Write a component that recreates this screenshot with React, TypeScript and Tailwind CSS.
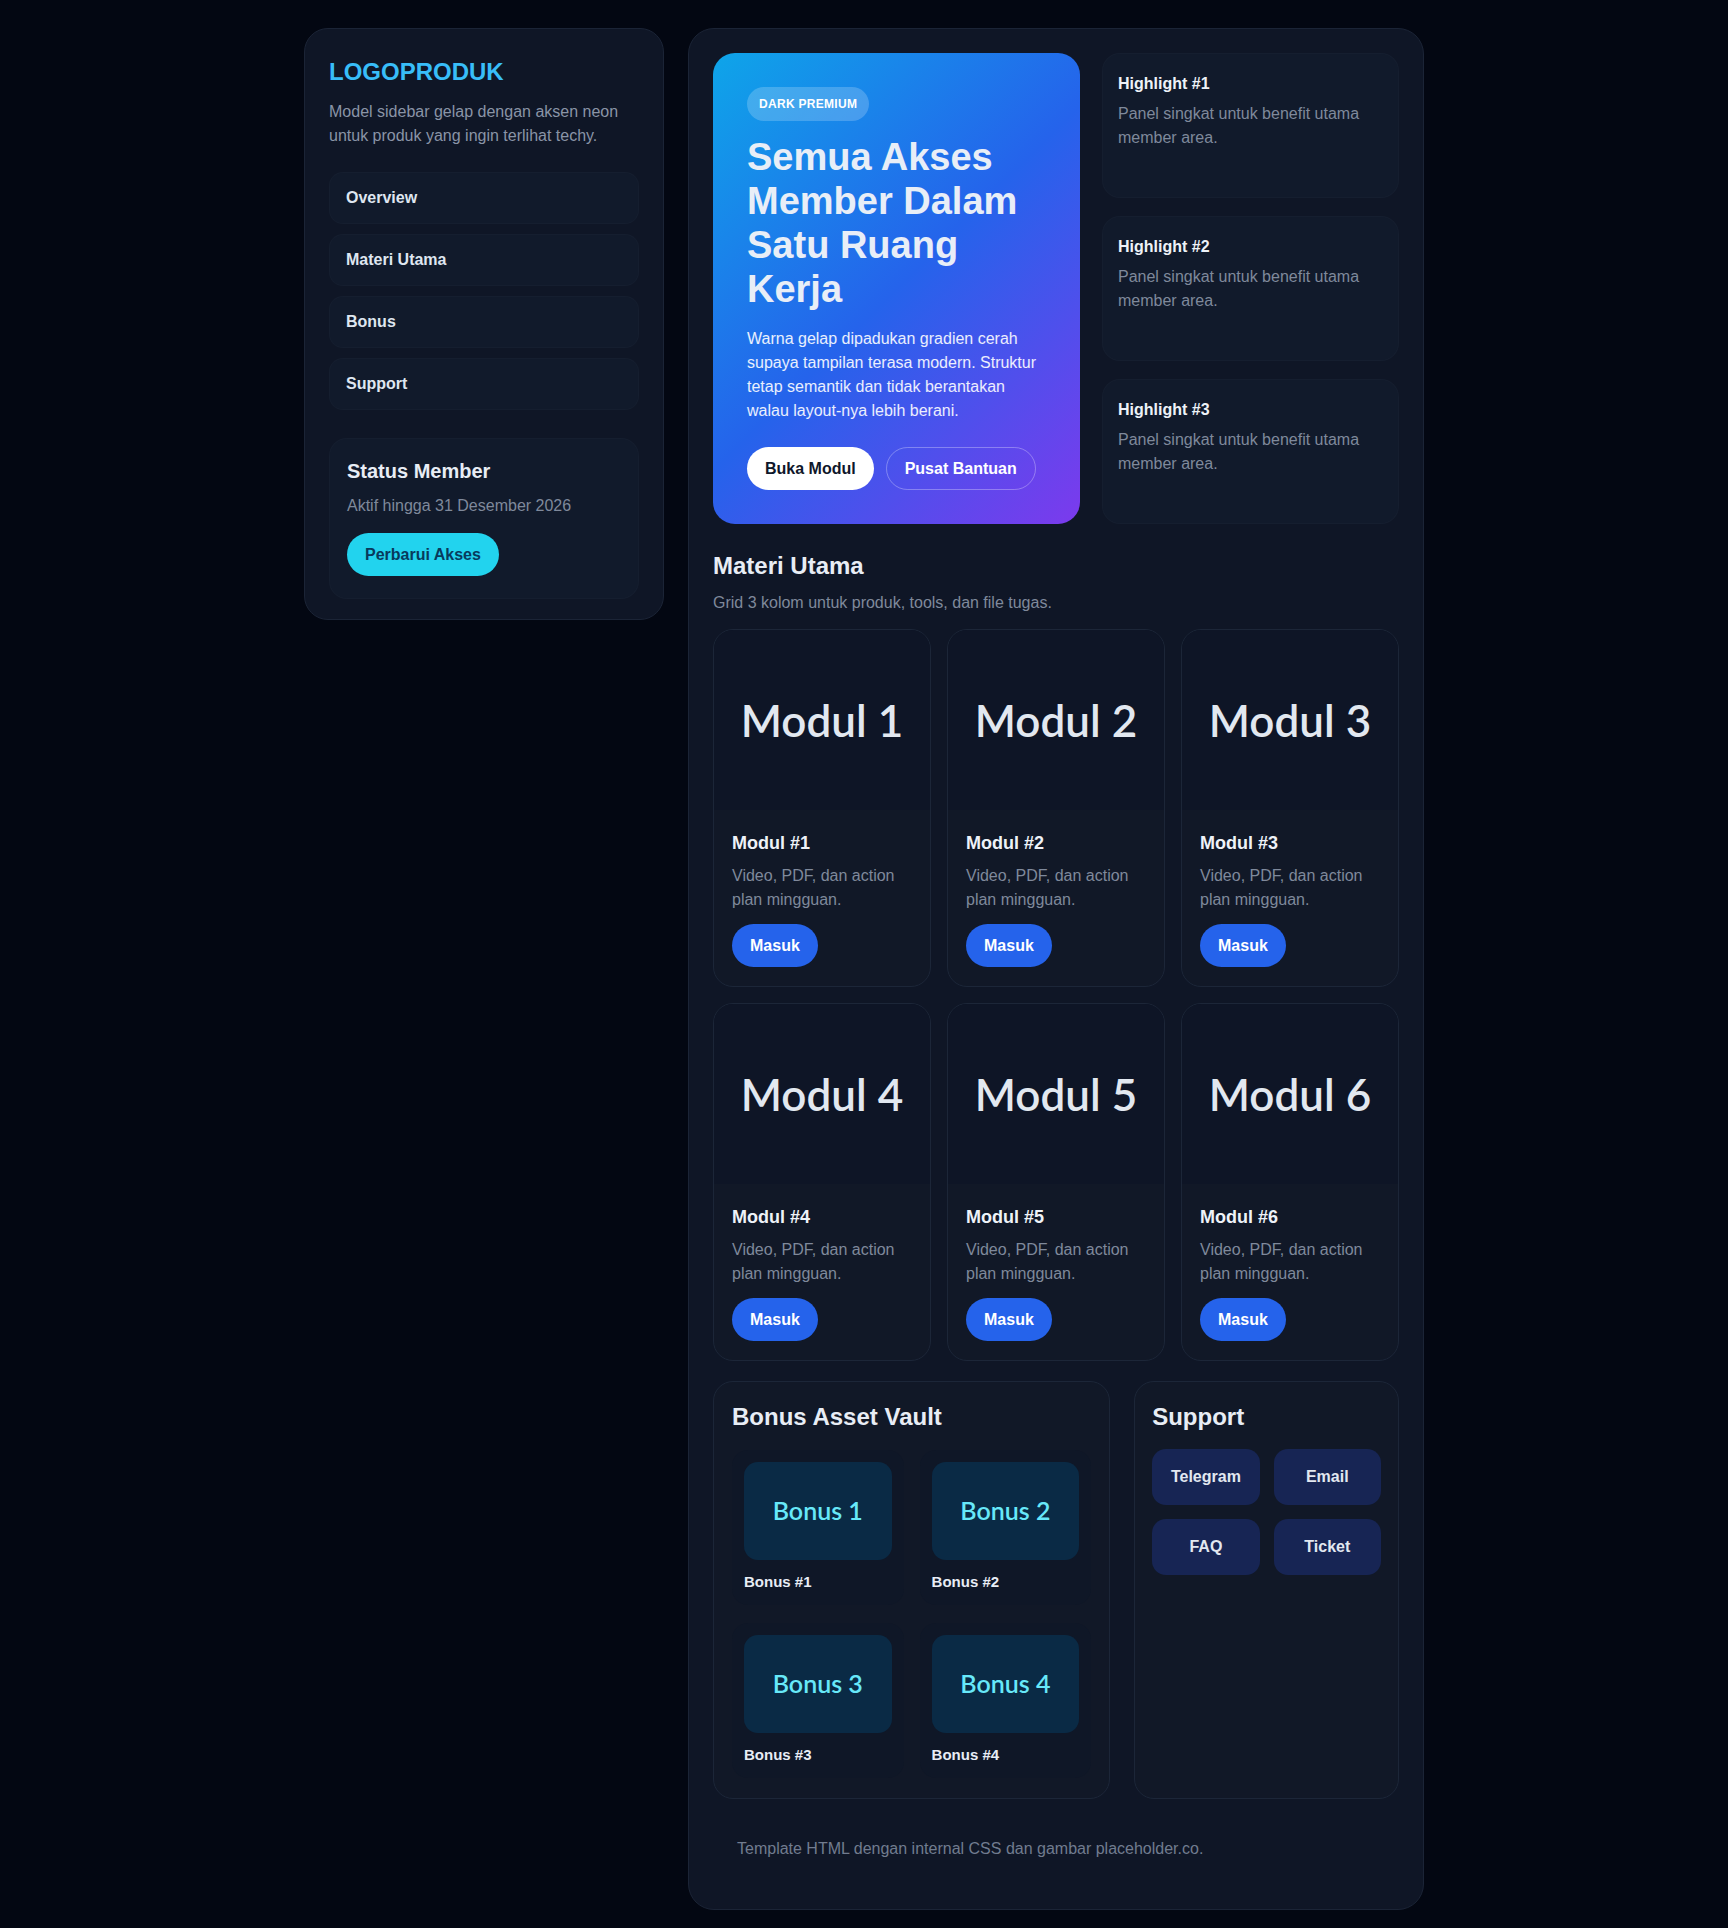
const navItems = ["Overview", "Materi Utama", "Bonus", "Support"];
const modules = [1, 2, 3, 4, 5, 6];
const bonuses = [1, 2, 3, 4];
const supportLinks = ["Telegram", "Email", "FAQ", "Ticket"];

function Sidebar() {
  return (
    <aside className="rounded-[24px] border border-[#1b2436] bg-[#0f1626] px-6 pt-7 pb-5">
      <div className="text-[24px] font-bold leading-[29px] text-[#38bdf8]">LOGOPRODUK</div>
      <p className="mt-[14px] text-[16px] leading-[24px] text-[#8a94a6]">
        Model sidebar gelap dengan aksen neon untuk produk yang ingin terlihat techy.
      </p>
      <nav className="mt-6 flex flex-col gap-[10px]">
        {navItems.map((item) => (
          <a
            key={item}
            className="rounded-[14px] border border-white/[0.02] bg-[#111a2b] px-4 py-[13px] text-[16px] font-bold leading-[24px] text-[#dfe6f0]"
          >
            {item}
          </a>
        ))}
      </nav>
      <div className="mt-7 rounded-[18px] border border-white/[0.02] bg-[#111a2b] px-[17px] pt-5 pb-[22px]">
        <h3 className="text-[20px] font-bold leading-[24px] text-[#e8edf5]">Status Member</h3>
        <p className="mt-[11px] text-[16px] leading-[24px] text-[#7f899b]">Aktif hingga 31 Desember 2026</p>
        <button className="mt-[15px] rounded-full bg-[#22d3ee] px-[18px] py-3 text-[16px] font-bold leading-[19px] text-[#083a5c]">
          Perbarui Akses
        </button>
      </div>
    </aside>
  );
}

function Hero() {
  return (
    <div className="grid grid-cols-[367px_1fr] gap-[22px]">
      <div className="rounded-[22px] bg-[linear-gradient(135deg,#0ea5e9_0%,#2563eb_50%,#7c3aed_100%)] p-[34px]">
        <span className="inline-block rounded-full bg-white/20 px-3 py-[10px] text-[12px] font-bold leading-[14px] tracking-[0.3px] text-white">
          DARK PREMIUM
        </span>
        <h1 className="mt-[14px] text-[38px] font-bold leading-[44px] text-[#e8eef7]">
          Semua Akses Member Dalam Satu Ruang Kerja
        </h1>
        <p className="mt-[16px] text-[16px] leading-[24px] text-white/90">
          Warna gelap dipadukan gradien cerah supaya tampilan terasa modern. Struktur tetap semantik dan tidak berantakan walau layout-nya lebih berani.
        </p>
        <div className="mt-6 flex gap-3">
          <button className="rounded-full bg-white px-[18px] py-3 text-[16px] font-bold leading-[19px] text-[#0f172a]">
            Buka Modul
          </button>
          <button className="rounded-full border border-white/30 px-[18px] py-[11px] text-[16px] font-bold leading-[19px] text-white">
            Pusat Bantuan
          </button>
        </div>
      </div>
      <div className="flex flex-col gap-[18px]">
        {[1, 2, 3].map((n) => (
          <div key={n} className="flex-1 rounded-[18px] border border-white/[0.02] bg-[#111a2b] px-[15px] pt-[18px]">
            <h3 className="text-[16px] font-bold leading-[24px] text-[#eef2f8]">Highlight #{n}</h3>
            <p className="mt-[6px] text-[16px] leading-[24px] text-[#7f899b]">
              Panel singkat untuk benefit utama member area.
            </p>
          </div>
        ))}
      </div>
    </div>
  );
}

function ModuleCard({ n }: { n: number }) {
  return (
    <div className="overflow-hidden rounded-[20px] border border-[#1c2638] bg-[#111827]">
      <div className="flex h-[180px] items-center justify-center bg-[#0e1526] font-['Lato',sans-serif] text-[44px] font-semibold text-[#e2e8f0]">
        Modul {n}
      </div>
      <div className="px-[18px] pt-5 pb-[19px]">
        <h3 className="text-[18px] font-bold leading-[27px] text-[#eef2f8]">Modul #{n}</h3>
        <p className="mt-[7px] text-[16px] leading-[24px] text-[#7f899b]">Video, PDF, dan action plan mingguan.</p>
        <button className="mt-3 rounded-full bg-[#2563eb] px-[18px] py-3 text-[16px] font-bold leading-[19px] text-white">
          Masuk
        </button>
      </div>
    </div>
  );
}

function BonusVault() {
  return (
    <div className="rounded-[20px] border border-[#1c2638] bg-[#111827] px-[18px] pt-[20px] pb-5">
      <h2 className="text-[24px] font-bold leading-[30px] text-[#e8edf5]">Bonus Asset Vault</h2>
      <div className="mt-[18px] grid grid-cols-2 gap-x-4 gap-y-[18px]">
        {bonuses.map((n) => (
          <div key={n} className="rounded-[16px] bg-[#0f1727] p-3">
            <div className="flex h-[98px] items-center justify-center rounded-[14px] bg-[#0a2a45] font-['Lato',sans-serif] text-[25px] font-semibold text-[#67e8f9]">
              Bonus {n}
            </div>
            <div className="mt-[11px] text-[15px] font-bold leading-[22px] text-[#e8edf5]">Bonus #{n}</div>
          </div>
        ))}
      </div>
    </div>
  );
}

function SupportBox() {
  return (
    <div className="rounded-[20px] border border-[#1c2638] bg-[#111827] px-[17px] pt-[20px] pb-5">
      <h2 className="text-[24px] font-bold leading-[30px] text-[#e8edf5]">Support</h2>
      <div className="mt-[17px] grid grid-cols-2 gap-[14px]">
        {supportLinks.map((s) => (
          <a
            key={s}
            className="rounded-[14px] bg-[#172554] py-[18px] text-center text-[16px] font-bold leading-[20px] text-[#e2e8f0]"
          >
            {s}
          </a>
        ))}
      </div>
    </div>
  );
}

export default function App() {
  return (
    <div className="min-h-screen bg-[#030712] py-7 font-['Liberation_Sans',Arial,sans-serif]">
      <div className="mx-auto grid w-[1120px] grid-cols-[360px_1fr] items-start gap-6">
        <Sidebar />
        <main className="rounded-[26px] border border-[#1b2436] bg-[#0f1626] p-6">
          <Hero />
          <section className="mt-[27px]">
            <h2 className="text-[24px] font-bold leading-[30px] text-[#e8edf5]">Materi Utama</h2>
            <p className="mt-[10px] text-[16px] leading-[24px] text-[#7f899b]">
              Grid 3 kolom untuk produk, tools, dan file tugas.
            </p>
            <div className="mt-[14px] grid grid-cols-3 gap-4">
              {modules.map((n) => (
                <ModuleCard key={n} n={n} />
              ))}
            </div>
          </section>
          <section className="mt-5 grid grid-cols-[1.5fr_1fr] gap-6">
            <BonusVault />
            <SupportBox />
          </section>
          <footer className="mt-[18px] px-6 pt-5 pb-6 text-[16px] leading-[24px] text-[#717c8f]">
            Template HTML dengan internal CSS dan gambar placeholder.co.
          </footer>
        </main>
      </div>
    </div>
  );
}
